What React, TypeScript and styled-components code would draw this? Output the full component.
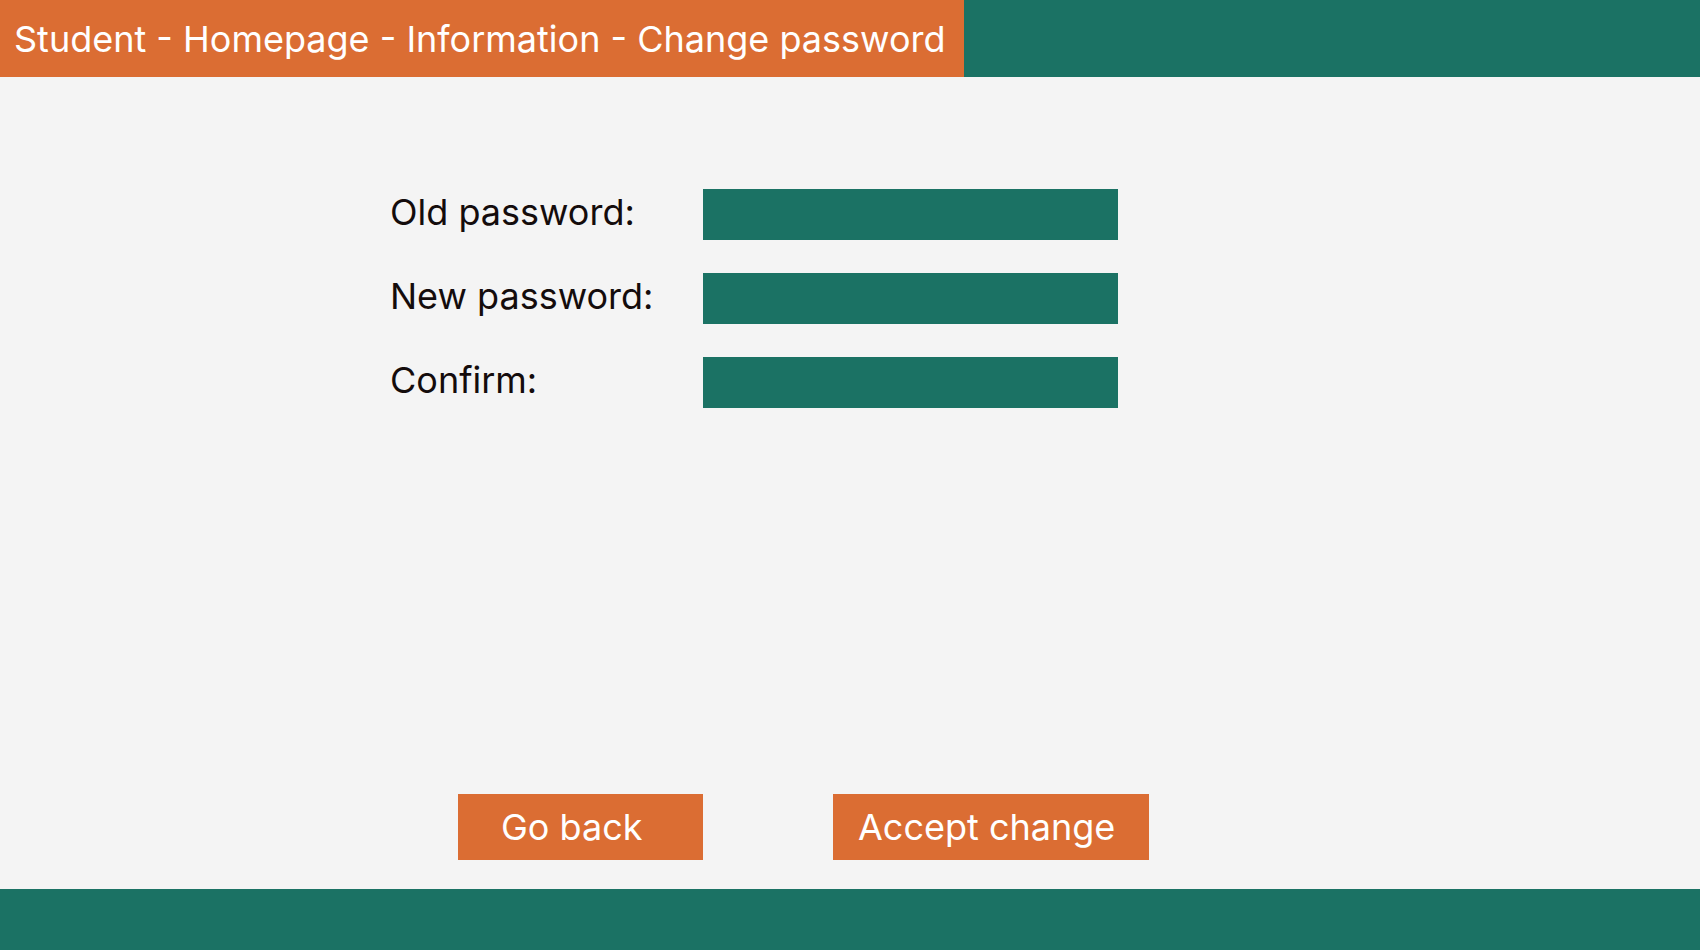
import React from "react";
import styled, { createGlobalStyle } from "styled-components";

const GlobalStyle = createGlobalStyle`
  html, body { margin: 0; padding: 0; }
  body { font-family: Inter, "Noto Sans", sans-serif; background: #f4f4f4; }
`;

const ORANGE = "#db6d33";
const GREEN = "#1b7264";

const Page = styled.div`
  display: flex;
  flex-direction: column;
  height: 950px;
  width: 1700px;
  background: #f4f4f4;
`;

const Header = styled.header`
  display: flex;
  height: 77px;
  background: ${GREEN};
  flex-shrink: 0;
`;

const TitleBox = styled.div`
  display: flex;
  align-items: center;
  width: 964px;
  padding-left: 14px;
  box-sizing: border-box;
  background: ${ORANGE};
  color: #ffffff;
  font-size: 36px;
  white-space: nowrap;
`;

const Main = styled.main`
  flex: 1;
  display: flex;
  flex-direction: column;
  padding: 112px 0 29px 390px;
`;

const Form = styled.div`
  display: flex;
  flex-direction: column;
  gap: 33px;
`;

const Row = styled.div`
  display: flex;
  align-items: center;
`;

const Label = styled.label`
  width: 313px;
  font-size: 36px;
  color: #140c0c;
  padding-bottom: 6px;
`;

const Field = styled.div`
  width: 415px;
  height: 51px;
  background: ${GREEN};
`;

const Actions = styled.div`
  margin-top: auto;
  margin-left: 68px;
  display: flex;
  gap: 130px;
`;

const Button = styled.button<{ $w: number; $pl: number }>`
  width: ${(p) => p.$w}px;
  height: 66px;
  padding: 0 0 0 ${(p) => p.$pl}px;
  border: none;
  background: ${ORANGE};
  color: #ffffff;
  font-family: Inter, "Noto Sans", sans-serif;
  font-size: 36px;
  text-align: left;
  cursor: pointer;
`;

const Footer = styled.footer`
  height: 61px;
  background: ${GREEN};
  flex-shrink: 0;
`;

export default function App() {
  return (
    <>
      <GlobalStyle />
      <Page>
        <Header>
          <TitleBox>Student - Homepage - Information - Change password</TitleBox>
        </Header>
        <Main>
          <Form>
            <Row>
              <Label>Old password:</Label>
              <Field />
            </Row>
            <Row>
              <Label>New password:</Label>
              <Field />
            </Row>
            <Row>
              <Label>Confirm:</Label>
              <Field />
            </Row>
          </Form>
          <Actions>
            <Button $w={245} $pl={43}>Go back</Button>
            <Button $w={316} $pl={25}>Accept change</Button>
          </Actions>
        </Main>
        <Footer />
      </Page>
    </>
  );
}
